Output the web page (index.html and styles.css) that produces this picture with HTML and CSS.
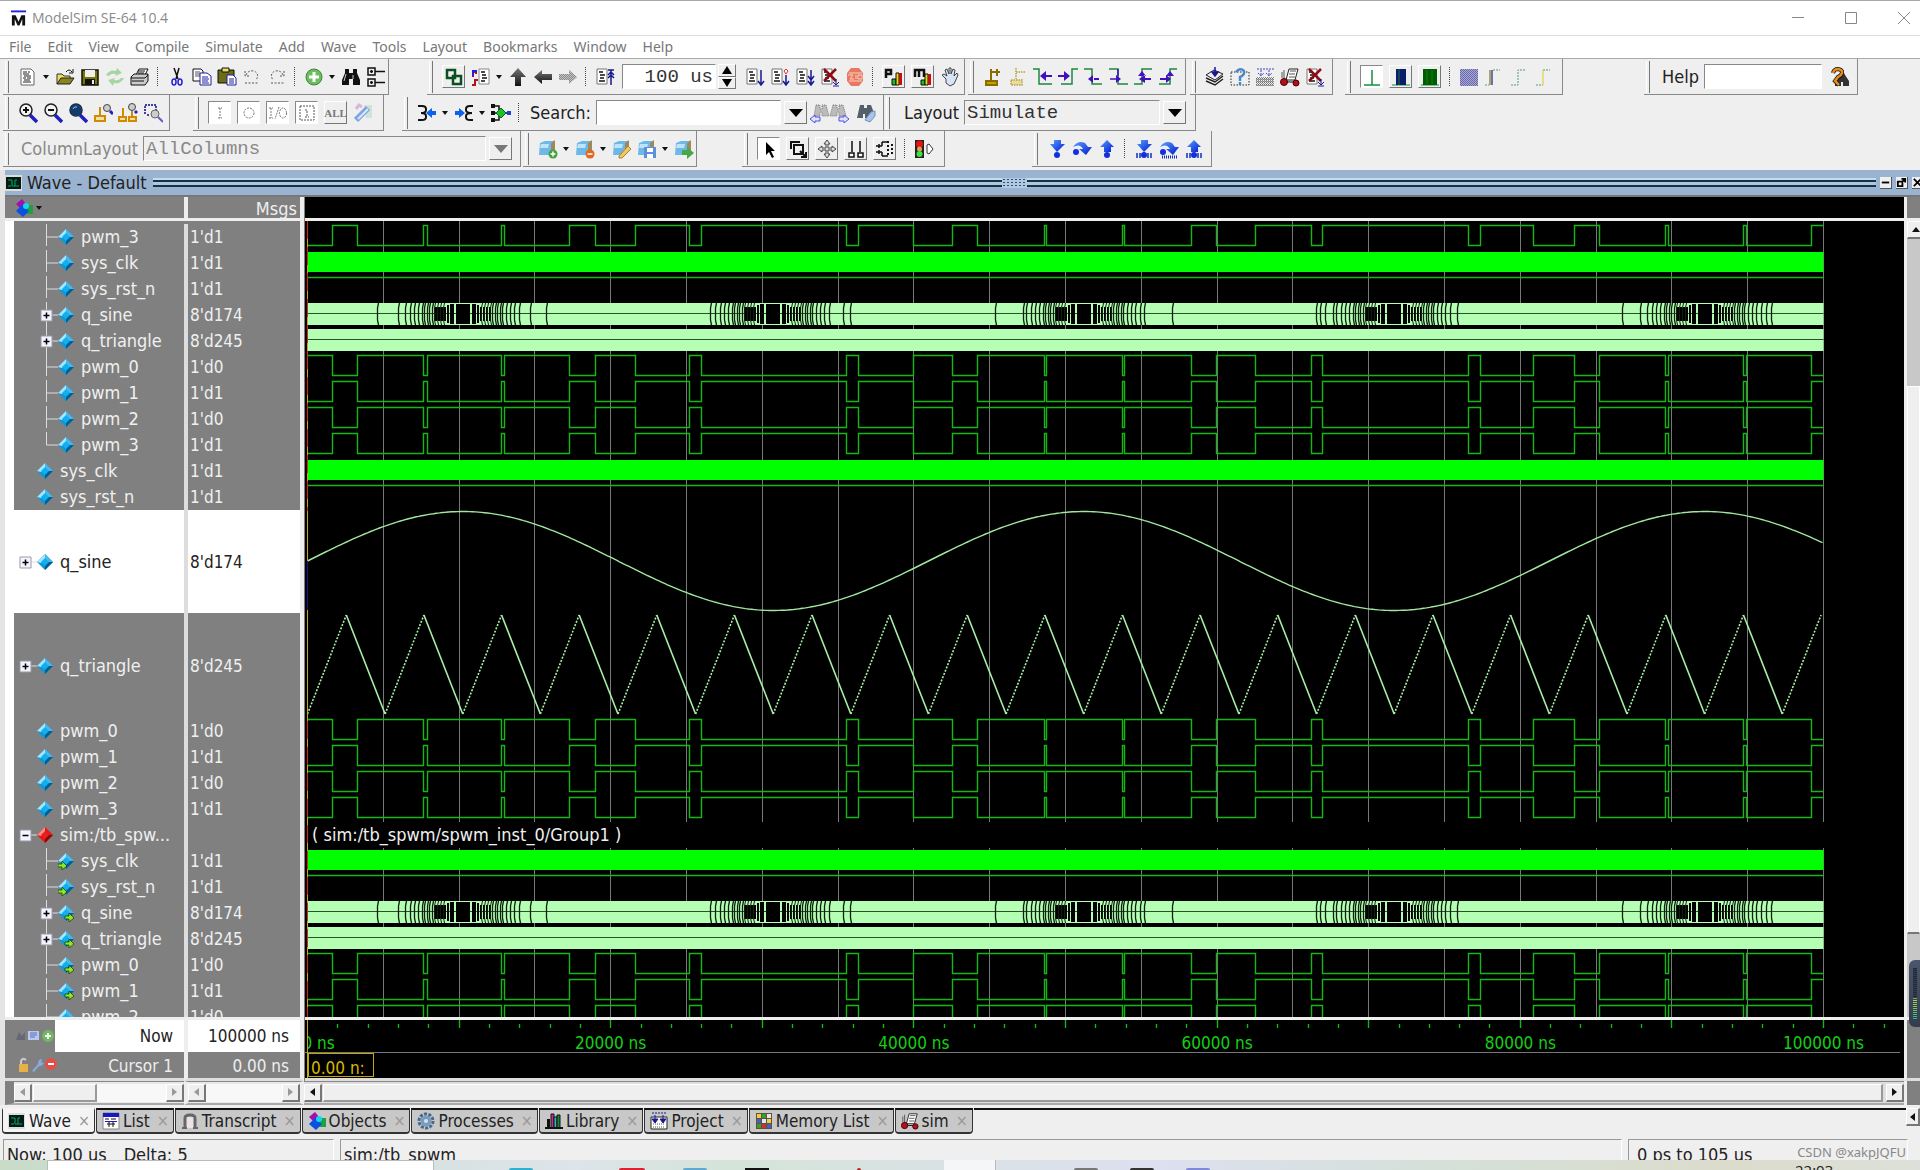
FILE: index.html
```html
<!DOCTYPE html>
<html lang="en">
<head>
<meta charset="utf-8">
<title>ModelSim SE-64 10.4</title>
<link rel="stylesheet" href="styles.css">
</head>
<body>
<svg class="defs" aria-hidden="true">
  <defs>
    <linearGradient id="blueDown" x1="0" y1="0" x2="1" y2="1"><stop offset="0" stop-color="#5aa0ff"/><stop offset="1" stop-color="#0018d0"/></linearGradient>
    <linearGradient id="grey" x1="0" y1="0" x2="0" y2="1"><stop offset="0" stop-color="#777"/><stop offset="1" stop-color="#111"/></linearGradient>
    <pattern id="dots" width="2" height="2" patternUnits="userSpaceOnUse"><path d="M0 0h1v1H0zM1 1h1v1H1z" fill="#888"/></pattern>
    <pattern id="bluedots" width="2" height="2" patternUnits="userSpaceOnUse"><path d="M0 0h1v1H0zM1 1h1v1H1z" fill="#2a2a90"/></pattern>
  </defs>
  <symbol id="page" viewBox="0 0 20 20"><path d="M3 2h10l3 3v13H3z" fill="#fff" stroke="#666"/><path d="M5 5h4M10 5h2M5 7h6M6 9h7M5 11h3M9 11h4M6 13h6M5 15h8" stroke="#222"/></symbol>
  <symbol id="open" viewBox="0 0 20 20"><path d="M2 17V7h5l2 2h6v3" fill="#e8e060" stroke="#333"/><path d="M2 17l4-6h13l-4 6z" fill="#8a8420" stroke="#222"/><path d="M11 5q3-4 6 0M18 2v4h-4" fill="none" stroke="#111"/></symbol>
  <symbol id="save" viewBox="0 0 20 20"><path d="M2 3h16v15H2z" fill="#7a7400" stroke="#111" stroke-width="1.5"/><path d="M5 3h10v7H5z" fill="#eee"/><path d="M5 12h10v6H5z" fill="#111"/><path d="M12 13h2v4h-2z" fill="#eee"/></symbol>
  <symbol id="refresh" viewBox="0 0 20 20"><path d="M1 8q4-6 10-4l1-3 5 5-7 3 1-2q-5-1-7 2z M19 11q-4 7-10 5l-1 3-5-6 7-2-1 2q5 1 7-2z" fill="#a4d6a4"/></symbol>
  <symbol id="print" viewBox="0 0 20 20"><path d="M6 8l3-6h9l-3 6" fill="#fff" stroke="#111"/><path d="M1 10l3-3h14v7l-3 4H1z" fill="#ccc" stroke="#111"/><path d="M1 11h14l3-3M2 14h12M8 4h7M8 6h6" stroke="#111" fill="none"/></symbol>
  <symbol id="cut" viewBox="0 0 20 20"><path d="M7 1l4 11M12 1L9 12" stroke="#111" stroke-width="1.5"/><ellipse cx="7" cy="15" rx="2" ry="3" fill="none" stroke="#2020e0" stroke-width="1.5"/><ellipse cx="13" cy="15" rx="2" ry="3" fill="none" stroke="#2020e0" stroke-width="1.5"/></symbol>
  <symbol id="copy" viewBox="0 0 20 20"><path d="M1 2h8l2 2v10H1z" fill="#fff" stroke="#111"/><path d="M3 5h5M3 7h6M3 9h5" stroke="#555"/><path d="M8 6h7l4 3v9H8z" fill="#fff" stroke="#2020a0"/><path d="M10 10h6M10 12h7M10 14h6M10 16h7" stroke="#2020a0"/></symbol>
  <symbol id="paste" viewBox="0 0 20 20"><path d="M1 3h16v13H1z" fill="#6b6b18" stroke="#111"/><path d="M5 1h7v4H5z" fill="#e8e060" stroke="#111"/><path d="M10 8h6l3 3v7h-9z" fill="#fff" stroke="#2020a0"/><path d="M12 12h5M12 14h5M12 16h5" stroke="#2020a0"/></symbol>
  <symbol id="undo" viewBox="0 0 20 20"><path d="M3 4v5h5M4 8q2-5 8-4 6 3 2 9M3 16h13" fill="none" stroke="#555" stroke-dasharray="2 1.500"/></symbol>
  <symbol id="redo" viewBox="0 0 20 20"><path d="M17 4v5h-5M16 8q-2-5-8-4-6 3-2 9M4 16h13" fill="none" stroke="#555" stroke-dasharray="2 1.500"/></symbol>
  <symbol id="add" viewBox="0 0 20 20"><circle cx="10" cy="10" r="8" fill="#6cbc60" stroke="#3c8c38"/><path d="M10 5v10M5 10h10" stroke="#fff" stroke-width="3"/></symbol>
  <symbol id="binoc" viewBox="0 0 20 20"><path d="M4 2h4v4h4V2h4v4l3 7v5h-7v-6H8v6H1v-5l3-7z" fill="#111"/><path d="M5 7l-2 7M12 8v4" stroke="#ccc"/></symbol>
  <symbol id="tree" viewBox="0 0 20 20"><path d="M2 1h7v7H2zM2 12h7v7H2z" fill="#eee" stroke="#111" stroke-width="1.500"/><path d="M4 4.500h3M5.500 3v3M4 15.500h3M5.500 14v3M9 4.500h10M9 15.500h10" stroke="#111" stroke-width="1.500"/></symbol>
  <symbol id="link" viewBox="0 0 20 20"><path d="M3 3h8v8H3zM9 9h8v8H9z" fill="none" stroke="#0a5020" stroke-width="2.500"/></symbol>
  <symbol id="restart" viewBox="0 0 20 20"><path d="M1 18h3v-5h3M2 10V5h4M5 3v4" fill="none" stroke="#b01020" stroke-width="2"/><path d="M2 9V4h4" fill="none" stroke="#2020e0" stroke-width="2"/><path d="M8 2h10v15H8z" fill="#fff" stroke="#888"/><path d="M10 5h4M11 8h4M11 11h5M10 14h4" stroke="#111" stroke-width="1.500"/></symbol>
  <symbol id="up" viewBox="0 0 20 20"><path d="M10 1l8 9h-5v9H7v-9H2z" fill="url(#grey)"/></symbol>
  <symbol id="left" viewBox="0 0 20 20"><path d="M1 10l8-7v4h10v6H9v4z" fill="url(#grey)"/></symbol>
  <symbol id="right" viewBox="0 0 20 20"><path d="M19 10l-8-7v4H1v6h10v4z" fill="#c4c4c4"/><path d="M19 10l-8-7v4H1v6h10v4z" fill="url(#dots)"/></symbol>
  <symbol id="code" viewBox="0 0 20 20"><path d="M2 2h10v15H2z" fill="#fff" stroke="#777"/><path d="M4 5h4M5 8h5M5 11h4M4 14h6" stroke="#111" stroke-width="1.500"/></symbol>
  <symbol id="runlen" viewBox="0 0 20 20"><use href="#code"/><path d="M13 3h6M16 3v15M13 8l3-3 3 3M13 11l3-3 3 3" stroke="#181890" stroke-width="1.500" fill="none"/></symbol>
  <symbol id="run" viewBox="0 0 20 20"><use href="#code"/><path d="M16 3v14M13 14l3 4 3-4" stroke="#181890" stroke-width="1.500" fill="none"/></symbol>
  <symbol id="cont" viewBox="0 0 20 20"><use href="#code"/><path d="M16 8v9M13 14l3 4 3-4" stroke="#181890" stroke-width="1.500" fill="none"/><path d="M14 4l2-2 2 2-2 3z" fill="#fff" stroke="#e03030"/></symbol>
  <symbol id="runall" viewBox="0 0 20 20"><use href="#code"/><path d="M16 3v14M13 9l3 4 3-4M13 14l3 4 3-4" stroke="#181890" stroke-width="1.500" fill="none"/></symbol>
  <symbol id="break" viewBox="0 0 20 20"><use href="#code"/><path d="M4 2l12 12M16 2L4 14" stroke="#900c14" stroke-width="2.500"/><path d="M16 12v6M13 15l3 3 3-3M13 19h6" stroke="#181890" fill="none"/></symbol>
  <symbol id="stop" viewBox="0 0 20 20"><path d="M6 1h8l4 5v8l-4 5H6l-4-5V6z" fill="#e87860"/><path d="M3 8h5l-3 4h4M11 8v4M13 8h4v4h-4zM4 6h13M4 14h13" stroke="#fbd0c8" fill="none"/></symbol>
  <symbol id="perf" viewBox="0 0 20 20"><path d="M2 11V3h5v4H2" fill="none" stroke="#111" stroke-width="2.500"/><path d="M8 12h4v6H8z" fill="#18c018" stroke="#111"/><path d="M12 6h3v12h-3z" fill="#e8d820" stroke="#111"/><path d="M15 6h3v12h-3z" fill="#c01010"/></symbol>
  <symbol id="mem" viewBox="0 0 20 20"><path d="M2 10V3h9v7M6 3v7" fill="none" stroke="#111" stroke-width="2.500"/><path d="M8 13h4v5H8z" fill="#18c018" stroke="#111"/><path d="M12 7h3v11h-3z" fill="#e8d820" stroke="#111"/><path d="M15 7h3v11h-3z" fill="#c01010"/></symbol>
  <symbol id="hand" viewBox="0 0 20 20"><path d="M6 12L2 8l2-1 3 2-2-6 2-1 2 5V1h2v6l2-5 2 1-1 6 3-3 1 2-4 9-4 2-4-3z" fill="#d8e4f4" stroke="#444"/></symbol>
  <symbol id="cursadd" viewBox="0 0 20 20"><path d="M8 2v11M3 14h11v4H3zM8 5h9M14 2v7" fill="#c8a000" stroke="#8a6c00" stroke-width="2"/></symbol>
  <symbol id="cursdel" viewBox="0 0 20 20"><path d="M8 1v11M3 13h11v5H3zM8 5h9" fill="#e8dca0" stroke="#b8a040" stroke-width="1.500" stroke-dasharray="1.500 1"/></symbol>
  <symbol id="prevt" viewBox="0 0 20 20"><path d="M0 2h6v15h13" fill="none" stroke="#1c8a3c" stroke-width="1.500"/><path d="M19 9h-8" stroke="#4010c0" stroke-width="2"/><path d="M7 9l6-5v10z" fill="#4010c0"/></symbol>
  <symbol id="nextt" viewBox="0 0 20 20"><path d="M3 17h11V2h6" fill="none" stroke="#1c8a3c" stroke-width="1.500"/><path d="M0 9h7" stroke="#4010c0" stroke-width="2"/><path d="M12 9L6 4v10z" fill="#4010c0"/></symbol>
  <symbol id="fallp" viewBox="0 0 20 20"><path d="M1 2h8v15h10" fill="none" stroke="#1c8a3c" stroke-width="1.500"/><path d="M16 12h-5" stroke="#4010c0" stroke-width="2"/><path d="M5 12l5-4v8z" fill="#4010c0"/></symbol>
  <symbol id="falln" viewBox="0 0 20 20"><path d="M1 2h9v15h10" fill="none" stroke="#1c8a3c" stroke-width="1.500"/><path d="M2 12h6M10 2v7" stroke="#4010c0" stroke-width="1.500"/><path d="M13 12l-5-4v8z" fill="#4010c0"/></symbol>
  <symbol id="risep" viewBox="0 0 20 20"><path d="M1 17h8V2h10" fill="none" stroke="#1c8a3c" stroke-width="1.500"/><path d="M18 12h-6" stroke="#4010c0" stroke-width="2"/><path d="M6 12l6-4v8zM5 9h8L9 4z" fill="#4010c0"/></symbol>
  <symbol id="risen" viewBox="0 0 20 20"><path d="M1 17h11V2h7" fill="none" stroke="#1c8a3c" stroke-width="1.500"/><path d="M2 12h6" stroke="#4010c0" stroke-width="2"/><path d="M13 12l-5-4v8zM8 9h8l-4-5z" fill="#4010c0"/></symbol>
  <symbol id="stack" viewBox="0 0 20 20"><path d="M1 14l9 4 8-6M1 11l9 4 8-6" fill="none" stroke="#222" stroke-width="1.500"/><path d="M1 8l8-5 9 4-8 6z" fill="#eee" stroke="#222"/><path d="M10 0v7M7 5l3 4 3-4z" fill="#181890" stroke="#181890" stroke-width="1.500"/></symbol>
  <symbol id="query" viewBox="0 0 20 20"><path d="M1 5h18v13H1z" fill="none" stroke="#222" stroke-dasharray="1.500 1.500"/><path d="M6 5q4-5 8-1 1 4-4 6v4M10 15v3" fill="none" stroke="#4a8ac8" stroke-width="2.500"/></symbol>
  <symbol id="grid" viewBox="0 0 20 20"><path d="M1 10h18v9H1z" fill="url(#dots)"/><path d="M1 12h18M1 15h18M1 18h18" stroke="#555" stroke-dasharray="1 1"/><path d="M2 2h17M6 3v6M14 3v6M3 6l3 3 3-3M11 6l3 3 3-3" fill="none" stroke="#4040c0" stroke-dasharray="2 1"/></symbol>
  <symbol id="simi" viewBox="0 0 20 20"><path d="M6 13L9 2h9l-3 11z" fill="#fff" stroke="#222"/><path d="M10 4h6M9 7h6M9 10h6M4 3v9M2 5v6" stroke="#555"/><path d="M3 15h14" stroke="#111"/><circle cx="4" cy="15" r="3.500" fill="#b01020" stroke="#400"/><circle cx="16" cy="16" r="3" fill="#b01020" stroke="#400"/></symbol>
  <symbol id="w1" viewBox="0 0 20 20"><path d="M2 18h16M10 18V3" stroke="#18903c" stroke-width="1.500"/></symbol>
  <symbol id="w2" viewBox="0 0 20 20"><path d="M1 18h18" stroke="#18903c"/><path d="M5 2h10v16H5z" fill="#0c1c6c"/><path d="M8 2v16" stroke="#18703c"/></symbol>
  <symbol id="w3" viewBox="0 0 20 20"><path d="M1 18h18" stroke="#18903c"/><path d="M3 2h14v16H3z" fill="#005c00"/><path d="M7 3v14M12 3v14" stroke="#108010"/></symbol>
  <symbol id="w4" viewBox="0 0 20 20"><path d="M1 2h18v17H1z" fill="#a8a8d0"/><path d="M1 2h18v17H1z" fill="url(#bluedots)" opacity=".5"/></symbol>
  <symbol id="w5" viewBox="0 0 20 20"><path d="M5 3h4v15H5z" fill="#7070a8"/><path d="M1 18h4M9 3h7" stroke="#50a070" stroke-dasharray="2 1"/><path d="M6 3v15" stroke="#e0d840"/></symbol>
  <symbol id="w6" viewBox="0 0 20 20"><path d="M2 18h7V3h7" fill="none" stroke="#50a070" stroke-dasharray="2 1"/></symbol>
  <symbol id="w7" viewBox="0 0 20 20"><path d="M2 18h7M9 3h7" stroke="#50a070" stroke-dasharray="2 1"/><path d="M9 3v15" stroke="#d8d020"/></symbol>
  <symbol id="helpfind" viewBox="0 0 20 20"><path d="M8 9l3-3h3l1 2 4 6v5h-6v-4h-2v4H5v-5z" fill="#333"/><path d="M3 6q1-4 5-4 5 1 4 4-1 3-4 4l-3 4 4 4" fill="none" stroke="#111" stroke-width="4"/><path d="M3 6q1-4 5-4 5 1 4 4-1 3-4 4l-3 4 4 4" fill="none" stroke="#e88c20" stroke-width="2.500"/></symbol>
  <symbol id="lens" viewBox="0 0 20 20"><path d="M12 12l7 7" stroke="#2020c0" stroke-width="3.500"/><circle cx="8" cy="7" r="6" fill="#f4f4f8" stroke="#222" stroke-width="1.500"/></symbol>
  <symbol id="zin" viewBox="0 0 20 20"><use href="#lens"/><path d="M8 4v6M5 7h6" stroke="#111" stroke-width="2"/></symbol>
  <symbol id="zout" viewBox="0 0 20 20"><use href="#lens"/><path d="M5 7h6" stroke="#111" stroke-width="2"/></symbol>
  <symbol id="zfull" viewBox="0 0 20 20"><use href="#lens"/><circle cx="8" cy="7" r="6" fill="#103c70"/><path d="M5 6q1-3 4-2" stroke="#a0c8e8" fill="none"/></symbol>
  <symbol id="zcur" viewBox="0 0 20 20"><path d="M7 4v9M2 13h10v5H2z" fill="#f0e0b0" stroke="#d08c00" stroke-width="2"/><path d="M17 8l3 3" stroke="#2020c0" stroke-width="3"/><circle cx="14" cy="5" r="3.500" fill="#ccc" stroke="#444"/></symbol>
  <symbol id="z2cur" viewBox="0 0 20 20"><path d="M5 5v9M1 14h7v4H1zM14 8v6M11 14h7v4h-7z" fill="#f0e0b0" stroke="#d08c00" stroke-width="2"/><path d="M17 8l2 2" stroke="#2020c0" stroke-width="3"/><circle cx="14" cy="4" r="3.500" fill="#ccc" stroke="#444"/></symbol>
  <symbol id="zsel" viewBox="0 0 20 20"><path d="M2 11V2h11v5M4 12h3" fill="none" stroke="#4040a0" stroke-width="2" stroke-dasharray="2 1"/><path d="M15 14l5 5" stroke="#6060c0" stroke-width="2"/><circle cx="12" cy="11" r="4" fill="#ccc" stroke="#666"/></symbol>
  <symbol id="fi" viewBox="0 0 20 20"><path d="M8 5h4M10 5v10M8 15h4" stroke="#777" stroke-dasharray="2 1"/></symbol>
  <symbol id="fo" viewBox="0 0 20 20"><circle cx="10" cy="10" r="5" fill="none" stroke="#777" stroke-dasharray="2 1"/></symbol>
  <symbol id="fio" viewBox="0 0 20 20"><path d="M3 5v10M1 5h4M1 15h4M11 4L7 16" stroke="#777" stroke-dasharray="2 1"/><ellipse cx="15" cy="10" rx="3.500" ry="5" fill="none" stroke="#777" stroke-dasharray="2 1"/></symbol>
  <symbol id="fint" viewBox="0 0 20 20"><path d="M3 3h14v14H3zM8 7h2v7M8 14h4" fill="none" stroke="#555" stroke-dasharray="2 1"/></symbol>
  <symbol id="wand" viewBox="0 0 20 20"><path d="M3 6l3-4 3 2" stroke="#d8b8d8" stroke-width="3" fill="none"/><path d="M11 2h8v13h-6z" fill="#cfe4d4"/><path d="M3 17L15 5" stroke="#80a4e0" stroke-width="6"/><path d="M5 16L15 6" stroke="#d8e8ff" stroke-width="2"/></symbol>
  <symbol id="ing" viewBox="0 0 20 20"><path d="M1 3h4q4 0 4 3v1q0 3-5 3 5 0 5 3v1q0 3-4 3H1" fill="none" stroke="#111" stroke-width="2"/><path d="M9 10l6-5v3h4v4h-4v3z" fill="#1060f0"/></symbol>
  <symbol id="outg" viewBox="0 0 20 20"><path d="M19 3h-3q-4 0-4 3v1q0 3 6 3-6 0-6 3v1q0 3 4 3h3" fill="none" stroke="#111" stroke-width="2"/><path d="M11 10L5 5v3H1v4h4v3z" fill="#1060f0"/></symbol>
  <symbol id="net" viewBox="0 0 20 20"><path d="M2 3h6v14H2M2 10h17" fill="none" stroke="#111" stroke-width="1.500"/><path d="M0 1h4v4H0zM0 8h4v4H0zM0 15h4v4H0z" fill="#111"/><path d="M10 5l5 5-5 5-5-5z" fill="#20c020" stroke="#063"/><path d="M16 8h4v4h-4z" fill="#2040e0"/></symbol>
  <symbol id="findp" viewBox="0 0 20 20"><path d="M6 2h4v4h2V2h4l3 11h-7V9h-2v4H4z" fill="#bbb"/><path d="M6 2h4v4h2V2h4l3 11h-7V9h-2v4H4z" fill="none" stroke="#777" stroke-dasharray="1 1"/><path d="M0 16l5-4v2h5v4H5v2z" fill="#e0e0ff" stroke="#5050e0"/></symbol>
  <symbol id="findn" viewBox="0 0 20 20"><path d="M4 2h4v4h2V2h4l3 11h-7V9H8v4H1z" fill="#bbb"/><path d="M4 2h4v4h2V2h4l3 11h-7V9H8v4H1z" fill="none" stroke="#777" stroke-dasharray="1 1"/><path d="M20 16l-5-4v2h-5v4h5v2z" fill="#e0e0ff" stroke="#5050e0"/></symbol>
  <symbol id="findo" viewBox="0 0 20 20"><path d="M4 2h4v3h3V2h4l3 8-5 5h-4v-4H7v4H1z" fill="#53606c"/><path d="M9 17l6-8 4-1v5l-5 6z" fill="#a8c4ec" stroke="#7890b8"/></symbol>
  <symbol id="cube" viewBox="0 0 20 20"><path d="M2 4l5-2h9l-1 11-4 3H1z" fill="#6cb8e8"/><path d="M13 4l4-3v10l-4 4z" fill="#a08858"/><path d="M3 5h8l-1 4H2z" fill="#bfe4fa"/></symbol>
  <symbol id="cadd" viewBox="0 0 20 20"><use href="#cube"/><circle cx="15" cy="15" r="4.500" fill="#48a040"/><path d="M15 12.500v5M12.500 15h5" stroke="#fff" stroke-width="1.500"/></symbol>
  <symbol id="cdel" viewBox="0 0 20 20"><use href="#cube"/><circle cx="15" cy="15" r="4.500" fill="#e06820"/><path d="M12.500 15h5" stroke="#fff" stroke-width="1.500"/></symbol>
  <symbol id="cedit" viewBox="0 0 20 20"><use href="#cube"/><path d="M7 17l9-10 3 3-9 9H7z" fill="#f0c860" stroke="#b08030"/></symbol>
  <symbol id="csave" viewBox="0 0 20 20"><use href="#cube"/><path d="M7 8h12v11H7z" fill="#5c90d8"/><path d="M10 9h6v4h-6zM10 15h6v4h-6z" fill="#fff"/></symbol>
  <symbol id="cgo" viewBox="0 0 20 20"><use href="#cube"/><path d="M8 11h5V8l7 6-7 6v-4H8z" fill="#48a848"/></symbol>
  <symbol id="arrow" viewBox="0 0 20 20"><path d="M7 3v13l3-3 3 6 2-1-3-6h4z" fill="#000"/></symbol>
  <symbol id="zoomm" viewBox="0 0 20 20"><path d="M3 10V3h9M6 6h9v9H6z" fill="none" stroke="#111" stroke-width="2"/><path d="M12 12l6 6M18 13v5h-5" fill="none" stroke="#111" stroke-width="2"/></symbol>
  <symbol id="pan" viewBox="0 0 20 20"><path d="M10 1l3 4h-2v4h4V7l4 3-4 3v-2h-4v4h2l-3 4-3-4h2v-4H5v2l-4-3 4-3v2h4V5H7z" fill="#ddd" stroke="#444"/></symbol>
  <symbol id="two" viewBox="0 0 20 20"><path d="M6 2v11M14 2v11M3 14h5v4H3zM12 14h5v4h-5z" fill="#fff" stroke="#111" stroke-width="1.500"/></symbol>
  <symbol id="edit" viewBox="0 0 20 20"><path d="M7 3h6M7 17h6M7 3v4M7 13v4M1 7h6M1 13h6M4 5v4M4 11v4" fill="none" stroke="#111" stroke-width="1.500"/><path d="M13 2v16M17 5v12" stroke="#111" stroke-width="2" stroke-dasharray="2 2"/></symbol>
  <symbol id="light" viewBox="0 0 20 20"><path d="M1 1h9v18H1z" fill="#222"/><circle cx="5.500" cy="5" r="3.500" fill="#e81010"/><circle cx="5.500" cy="10" r="2.500" fill="#e0a050"/><circle cx="5.500" cy="15" r="3" fill="#40e040"/><path d="M13 6v8l2 1 4-5-4-5z" fill="#fff" stroke="#333"/></symbol>
  <symbol id="into" viewBox="0 0 20 20"><path d="M7 1h7v4h4l-8 8-7-8h4z" fill="url(#blueDown)"/><circle cx="10" cy="16" r="3" fill="#1030e0"/></symbol>
  <symbol id="over" viewBox="0 0 20 20"><path d="M1 8Q6 1 13 4l3 4h4l-6 8-7-6h4Q8 4 1 8z" fill="url(#blueDown)"/><circle cx="4" cy="13" r="3" fill="#1030e0"/></symbol>
  <symbol id="outof" viewBox="0 0 20 20"><path d="M10 1l7 7h-3v5H7V8H3z" fill="url(#blueDown)"/><circle cx="10" cy="16" r="3" fill="#1030e0"/></symbol>
  <symbol id="bars" viewBox="0 0 20 20"><path d="M3 14v5M6 14v5M14 14v5M17 14v5" stroke="#1030c0" stroke-width="1.500"/></symbol>
  <symbol id="into2" viewBox="0 0 20 20"><use href="#into"/><use href="#bars"/></symbol>
  <symbol id="over2" viewBox="0 0 20 20"><use href="#over"/><path d="M3 18h15" stroke="#1030c0" stroke-width="3" stroke-dasharray="1 1"/></symbol>
  <symbol id="outof2" viewBox="0 0 20 20"><use href="#outof"/><use href="#bars"/></symbol>
  <symbol id="wave" viewBox="0 0 18 18"><path d="M0 1h17v16H0z" fill="#ddd"/><path d="M1 3h15v12H1z" fill="#041c14"/><path d="M3 6h4v6h3V6h2M3 12h3M10 12h4" stroke="#0a6" fill="none"/></symbol>
  <symbol id="gem" viewBox="0 0 16 18"><path d="M8 1l8 8-8 8-8-8z" fill="#0a9ad8"/><path d="M8 1l8 8H8z" fill="#48b8e8"/><path d="M8 17l8-8H8z" fill="#065c90"/><path d="M8 1L0 9l4 1 4-4z" fill="#a8e4fc"/><path d="M8 5l4 4-4 4-4-4z" fill="#10b0f0"/></symbol>
  <symbol id="redgem" viewBox="0 0 16 18"><path d="M8 1l8 8-8 8-8-8z" fill="#e01818"/><path d="M8 17l8-8H8z" fill="#8c0808"/><path d="M8 1L0 9l4 1 4-4z" fill="#f88"/><path d="M8 5l4 4-4 4-4-4z" fill="#e82020"/></symbol>
  <symbol id="ingem" viewBox="0 0 16 18"><use href="#gem"/><path d="M0 12h4V9l5 5-5 4v-3H0z" fill="#8ce820" stroke="#183008" stroke-width=".7"/></symbol>
  <symbol id="outgem" viewBox="0 0 16 18"><use href="#gem"/><path d="M7 12h4V9l5 5-5 4v-3H7z" fill="#8ce820" stroke="#183008" stroke-width=".7"/></symbol>
  <symbol id="tee" viewBox="0 0 22 26"><path d="M10.500 0v22M10.500 13H22" stroke="#ddd" fill="none"/></symbol>
  <symbol id="end" viewBox="0 0 22 26"><path d="M10.500 0v13H22" stroke="#ddd" fill="none"/></symbol>
  <symbol id="plus" viewBox="0 0 22 26"><path d="M16 13h6" stroke="#ddd"/><path d="M5 8h11v11H5z" fill="#f4f4ff" stroke="#99a"/><path d="M10.500 10.500v6M7.500 13.500h6" stroke="#000" stroke-width="1.500"/></symbol>
  <symbol id="plusin" viewBox="0 0 22 26"><path d="M10.500 0v26" stroke="#ddd"/><use href="#plus"/></symbol>
  <symbol id="minus" viewBox="0 0 22 26"><path d="M16 13h6" stroke="#ddd"/><path d="M5 8h11v11H5z" fill="#f4f4ff" stroke="#99a"/><path d="M7.500 13.500h6" stroke="#000" stroke-width="1.500"/></symbol>
  <symbol id="objects" viewBox="0 0 18 18"><path d="M1 5l6-5 4 5v4H5z" fill="#a010b0"/><path d="M10 6h8v9h-8z" fill="#20a040"/><path d="M7 6l7 6-6 6-7-6z" fill="#0850e0"/><circle cx="11" cy="7" r="3" fill="#10d8f0"/></symbol>
  <symbol id="list" viewBox="0 0 18 18"><path d="M1 1h16v16H1z" fill="#fff" stroke="#888"/><path d="M1 1h16v4H1zM3 9h12v1H3z" fill="#1818c0"/><path d="M3 7h4M9 7h5M5 12h8M7 10v5M11 10v5" stroke="#111"/></symbol>
  <symbol id="script" viewBox="0 0 18 18"><path d="M4 16V6q0-3 5-3t5 3v10" fill="#ece4e4" stroke="#666" stroke-width="3"/><path d="M1 16h5M12 16h5" stroke="#666" stroke-width="2"/></symbol>
  <symbol id="gear" viewBox="0 0 18 18"><circle cx="9" cy="9" r="7" fill="none" stroke="#44688c" stroke-width="3" stroke-dasharray="3 1.400"/><circle cx="9" cy="9" r="5.500" fill="#7c9cbc"/><circle cx="9" cy="9" r="2" fill="#dde"/></symbol>
  <symbol id="books" viewBox="0 0 18 18"><path d="M2 7h3v9H2z" fill="#111"/><path d="M6 2h3v14H6z" fill="#c03080" stroke="#111"/><path d="M9 5h3v11H9z" fill="#30b0d0" stroke="#111"/><path d="M12 3h3v13h-3z" fill="#208030" stroke="#111"/><path d="M0 16h18" stroke="#111" stroke-width="2"/></symbol>
  <symbol id="project" viewBox="0 0 18 18"><path d="M1 5h16v12H1z" fill="#fff" stroke="#222"/><path d="M3 12h12M3 15h12" stroke="#555" stroke-dasharray="1 1"/><path d="M2 1h14" stroke="#181890" stroke-dasharray="2 1"/><path d="M5 3v4M13 3v4M2 7h6l-3 4zM10 7h6l-3 4z" stroke="#181890" fill="#181890"/></symbol>
  <symbol id="memory" viewBox="0 0 18 18"><path d="M1 1h16v16H1z" fill="#685030"/><path d="M2 2h4v4H2zM12 7h4v4h-4z" fill="#e8d040"/><path d="M7 2h4v4H7zM2 12h4v4H2z" fill="#30a030"/><path d="M12 2h4v4h-4zM7 7h4v4H7z" fill="#d8e8f8"/><path d="M2 7h4v4H2zM12 12h4v4h-4z" fill="#4060d0"/><path d="M7 12h4v4H7z" fill="#d03030"/></symbol>
</svg>

<header class="titlebar">
  <svg class="logo" viewBox="0 0 18 18" aria-hidden="true"><path d="M1 1h16v2H1z" fill="#2222d8"/><path d="M2 17V6h4l3 7 3-7h4v11h-3v-7l-3 7H8l-3-7v7z" fill="#111"/></svg>
  <h1 class="title">ModelSim SE-64 10.4</h1>
  <div class="window-buttons">
    <button aria-label="Minimize"><svg viewBox="0 0 12 12"><path d="M0 5.500h12"/></svg></button>
    <button aria-label="Maximize"><svg viewBox="0 0 12 12"><path d="M.5.5h11v11H.5z"/></svg></button>
    <button aria-label="Close"><svg viewBox="0 0 12 12"><path d="M0 0l12 12M12 0L0 12"/></svg></button>
  </div>
</header>

<nav class="menu">
  <a href="#file">File</a><a href="#edit-menu">Edit</a><a href="#view">View</a><a href="#compile">Compile</a><a href="#simulate">Simulate</a><a href="#add-menu">Add</a><a href="#wave-menu">Wave</a><a href="#tools">Tools</a><a href="#layout-menu">Layout</a><a href="#bookmarks">Bookmarks</a><a href="#window">Window</a><a href="#help">Help</a>
</nav>

<section class="toolbars" aria-label="Toolbars">
  <div class="bar-row">
    <div class="bar bar-standard">
      <button class="tool" aria-label="New"><svg><use href="#page"/></svg></button><button class="drop" aria-label="New menu"></button>
      <button class="tool" aria-label="Open"><svg><use href="#open"/></svg></button>
      <button class="tool" aria-label="Save"><svg><use href="#save"/></svg></button>
      <button class="tool" aria-label="Reload"><svg><use href="#refresh"/></svg></button>
      <button class="tool" aria-label="Print"><svg><use href="#print"/></svg></button>
      <i class="sep"></i>
      <button class="tool" aria-label="Cut"><svg><use href="#cut"/></svg></button>
      <button class="tool" aria-label="Copy"><svg><use href="#copy"/></svg></button>
      <button class="tool" aria-label="Paste"><svg><use href="#paste"/></svg></button>
      <button class="tool" aria-label="Undo"><svg><use href="#undo"/></svg></button>
      <button class="tool" aria-label="Redo"><svg><use href="#redo"/></svg></button>
      <i class="sep"></i>
      <button class="tool" aria-label="Add"><svg><use href="#add"/></svg></button><button class="drop" aria-label="Add menu"></button>
      <button class="tool" aria-label="Find"><svg><use href="#binoc"/></svg></button>
      <button class="tool" aria-label="Expand tree"><svg><use href="#tree"/></svg></button>
    </div>
    <div class="bar bar-simulate">
      <button class="tool raised" aria-label="Link"><svg><use href="#link"/></svg></button>
      <button class="tool" aria-label="Restart"><svg><use href="#restart"/></svg></button><button class="drop" aria-label="Restart menu"></button>
      <button class="tool" aria-label="Up"><svg><use href="#up"/></svg></button>
      <button class="tool" aria-label="Back"><svg><use href="#left"/></svg></button>
      <button class="tool" aria-label="Forward"><svg><use href="#right"/></svg></button>
      <i class="sep"></i>
      <button class="tool" aria-label="Run length"><svg><use href="#runlen"/></svg></button>
      <input class="field run-time" aria-label="Run time" value="100 us">
      <span class="spinner"><button aria-label="Increase"></button><button aria-label="Decrease"></button></span>
      <button class="tool" aria-label="Run"><svg><use href="#run"/></svg></button>
      <button class="tool" aria-label="Continue"><svg><use href="#cont"/></svg></button>
      <button class="tool" aria-label="Run all"><svg><use href="#runall"/></svg></button>
      <button class="tool" aria-label="Break"><svg><use href="#break"/></svg></button>
      <button class="tool" aria-label="Stop"><svg><use href="#stop"/></svg></button>
      <i class="sep"></i>
      <button class="tool raised" aria-label="Performance profile"><svg><use href="#perf"/></svg></button>
      <button class="tool raised" aria-label="Memory profile"><svg><use href="#mem"/></svg></button>
      <button class="tool" aria-label="Grab"><svg><use href="#hand"/></svg></button>
    </div>
    <div class="bar bar-cursor">
      <button class="tool" aria-label="Insert cursor"><svg><use href="#cursadd"/></svg></button>
      <button class="tool" aria-label="Delete cursor"><svg><use href="#cursdel"/></svg></button>
      <button class="tool" aria-label="Previous transition"><svg><use href="#prevt"/></svg></button>
      <button class="tool" aria-label="Next transition"><svg><use href="#nextt"/></svg></button>
      <button class="tool" aria-label="Previous falling edge"><svg><use href="#fallp"/></svg></button>
      <button class="tool" aria-label="Next falling edge"><svg><use href="#falln"/></svg></button>
      <button class="tool" aria-label="Previous rising edge"><svg><use href="#risep"/></svg></button>
      <button class="tool" aria-label="Next rising edge"><svg><use href="#risen"/></svg></button>
    </div>
    <div class="bar bar-compile">
      <button class="tool" aria-label="Compile"><svg><use href="#stack"/></svg></button>
      <button class="tool" aria-label="Compile out of date"><svg><use href="#query"/></svg></button>
      <button class="tool" aria-label="Compile all"><svg><use href="#grid"/></svg></button>
      <button class="tool" aria-label="Start simulation"><svg><use href="#simi"/></svg></button>
      <button class="tool" aria-label="End simulation"><svg><use href="#break"/></svg></button>
    </div>
    <div class="bar bar-expand">
      <button class="tool pressed" aria-label="Expanded time off"><svg><use href="#w1"/></svg></button>
      <button class="tool raised" aria-label="Expanded time deltas"><svg><use href="#w2"/></svg></button>
      <button class="tool raised" aria-label="Expanded time events"><svg><use href="#w3"/></svg></button>
      <i class="sep"></i>
      <button class="tool" aria-label="Expand all time"><svg><use href="#w4"/></svg></button>
      <button class="tool" aria-label="Expand time at cursor"><svg><use href="#w5"/></svg></button>
      <button class="tool" aria-label="Collapse all time"><svg><use href="#w6"/></svg></button>
      <button class="tool" aria-label="Collapse time at cursor"><svg><use href="#w7"/></svg></button>
    </div>
    <div class="bar bar-help">
      <label for="help-box">Help</label>
      <input class="field help-box" id="help-box">
      <button class="tool" aria-label="Search help"><svg><use href="#helpfind"/></svg></button>
    </div>
  </div>

  <div class="bar-row">
    <div class="bar bar-zoom">
      <button class="tool" aria-label="Zoom in"><svg><use href="#zin"/></svg></button>
      <button class="tool" aria-label="Zoom out"><svg><use href="#zout"/></svg></button>
      <button class="tool" aria-label="Zoom full"><svg><use href="#zfull"/></svg></button>
      <button class="tool" aria-label="Zoom on cursor"><svg><use href="#zcur"/></svg></button>
      <button class="tool" aria-label="Zoom between cursors"><svg><use href="#z2cur"/></svg></button>
      <button class="tool" aria-label="Zoom others"><svg><use href="#zsel"/></svg></button>
    </div>
    <div class="bar bar-filter">
      <button class="tool pressed" aria-label="Inputs"><svg><use href="#fi"/></svg></button>
      <button class="tool pressed" aria-label="Outputs"><svg><use href="#fo"/></svg></button>
      <button class="tool pressed" aria-label="Inouts"><svg><use href="#fio"/></svg></button>
      <button class="tool pressed" aria-label="Internals"><svg><use href="#fint"/></svg></button>
      <button class="tool raised all">ALL</button>
      <button class="tool" aria-label="Filter options"><svg><use href="#wand"/></svg></button>
    </div>
    <div class="bar bar-search">
      <button class="tool" aria-label="Trace in"><svg><use href="#ing"/></svg></button><button class="drop" aria-label="Trace in menu"></button>
      <button class="tool" aria-label="Trace out"><svg><use href="#outg"/></svg></button><button class="drop" aria-label="Trace out menu"></button>
      <button class="tool" aria-label="Trace net"><svg><use href="#net"/></svg></button>
      <i class="sep"></i>
      <label for="search">Search:</label>
      <input class="field search-box" id="search">
      <button class="combo-arrow" aria-label="Search history"></button>
      <button class="tool tight" aria-label="Search backward"><svg><use href="#findp"/></svg></button>
      <button class="tool tight" aria-label="Search forward"><svg><use href="#findn"/></svg></button>
      <button class="tool options" aria-label="Search options"><svg><use href="#findo"/></svg></button>
    </div>
    <div class="bar bar-layout">
      <label for="layout">Layout</label>
      <select class="field layout-box" id="layout"><option>Simulate</option></select>
      <span class="combo-arrow"></span>
    </div>
  </div>

  <div class="bar-row">
    <div class="bar bar-columns">
      <label class="off" for="columns">ColumnLayout</label>
      <select class="field columns-box" id="columns" disabled><option>AllColumns</option></select>
      <span class="combo-arrow off"></span>
    </div>
    <div class="bar bar-cubes">
      <button class="tool" aria-label="Add group"><svg><use href="#cadd"/></svg></button><button class="drop" aria-label="Add group menu"></button>
      <button class="tool" aria-label="Remove group"><svg><use href="#cdel"/></svg></button><button class="drop" aria-label="Remove group menu"></button>
      <button class="tool" aria-label="Edit group"><svg><use href="#cedit"/></svg></button>
      <button class="tool" aria-label="Save group"><svg><use href="#csave"/></svg></button><button class="drop" aria-label="Save group menu"></button>
      <button class="tool" aria-label="Go to group"><svg><use href="#cgo"/></svg></button>
    </div>
    <div class="bar bar-mode">
      <button class="tool pressed" aria-label="Select mode"><svg><use href="#arrow"/></svg></button>
      <button class="tool raised" aria-label="Zoom mode"><svg><use href="#zoomm"/></svg></button>
      <button class="tool raised" aria-label="Pan mode"><svg><use href="#pan"/></svg></button>
      <button class="tool raised" aria-label="Two cursor mode"><svg><use href="#two"/></svg></button>
      <button class="tool raised" aria-label="Edit mode"><svg><use href="#edit"/></svg></button>
      <i class="sep"></i>
      <button class="tool" aria-label="Stop drawing"><svg><use href="#light"/></svg></button>
    </div>
    <div class="bar bar-step">
      <button class="tool" aria-label="Step into"><svg><use href="#into"/></svg></button>
      <button class="tool" aria-label="Step over"><svg><use href="#over"/></svg></button>
      <button class="tool" aria-label="Step out"><svg><use href="#outof"/></svg></button>
      <i class="sep"></i>
      <button class="tool" aria-label="Step into current"><svg><use href="#into2"/></svg></button>
      <button class="tool" aria-label="Step over current"><svg><use href="#over2"/></svg></button>
      <button class="tool" aria-label="Step out current"><svg><use href="#outof2"/></svg></button>
    </div>
  </div>
</section>

<main class="pane">
  <header class="pane-title">
    <svg class="pane-icon"><use href="#wave"/></svg>
    <h2>Wave - Default</h2>
    <i class="stripes"></i><i class="grip"></i><i class="stripes"></i>
    <span class="pane-buttons">
      <button aria-label="Minimize pane"><svg viewBox="0 0 12 12"><path d="M2 6h8"/></svg></button>
      <button aria-label="Undock pane"><svg viewBox="0 0 12 12"><path d="M2 5h5v5H2zM6 6l4-4M6 2h4v4"/></svg></button>
      <button aria-label="Close pane"><svg viewBox="0 0 12 12"><path d="M2 2l8 8M10 2l-8 8"/></svg></button>
    </span>
  </header>

  <div class="wave">
    <div class="head names-head"><svg class="pane-icon"><use href="#objects"/></svg><button class="drop" aria-label="Column menu"></button></div>
    <div class="head values-head">Msgs</div>
    <div class="head canvas-head"></div>
    <div class="head corner"></div>

    <div class="signals">
      <table>
        <colgroup><col class="col-name"><col class="col-value"></colgroup>
        <tbody>
        <tr><td><div class="name child"><svg class="branch"><use href="#tee"/></svg><svg class="gem"><use href="#gem"/></svg>pwm_3</div></td><td>1'd1</td></tr>
        <tr><td><div class="name child"><svg class="branch"><use href="#tee"/></svg><svg class="gem"><use href="#gem"/></svg>sys_clk</div></td><td>1'd1</td></tr>
        <tr><td><div class="name child"><svg class="branch"><use href="#tee"/></svg><svg class="gem"><use href="#gem"/></svg>sys_rst_n</div></td><td>1'd1</td></tr>
        <tr><td><div class="name child"><svg class="branch"><use href="#plusin"/></svg><svg class="gem"><use href="#gem"/></svg>q_sine</div></td><td>8'd174</td></tr>
        <tr><td><div class="name child"><svg class="branch"><use href="#plusin"/></svg><svg class="gem"><use href="#gem"/></svg>q_triangle</div></td><td>8'd245</td></tr>
        <tr><td><div class="name child"><svg class="branch"><use href="#tee"/></svg><svg class="gem"><use href="#gem"/></svg>pwm_0</div></td><td>1'd0</td></tr>
        <tr><td><div class="name child"><svg class="branch"><use href="#tee"/></svg><svg class="gem"><use href="#gem"/></svg>pwm_1</div></td><td>1'd1</td></tr>
        <tr><td><div class="name child"><svg class="branch"><use href="#tee"/></svg><svg class="gem"><use href="#gem"/></svg>pwm_2</div></td><td>1'd0</td></tr>
        <tr><td><div class="name child"><svg class="branch"><use href="#end"/></svg><svg class="gem"><use href="#gem"/></svg>pwm_3</div></td><td>1'd1</td></tr>
        <tr><td><div class="name"><svg class="branch"></svg><svg class="gem"><use href="#gem"/></svg>sys_clk</div></td><td>1'd1</td></tr>
        <tr><td><div class="name"><svg class="branch"></svg><svg class="gem"><use href="#gem"/></svg>sys_rst_n</div></td><td>1'd1</td></tr>
        <tr class="sine selected"><td><div class="name"><svg class="branch"><use href="#plus"/></svg><svg class="gem"><use href="#gem"/></svg>q_sine</div></td><td>8'd174</td></tr>
        <tr class="triangle"><td><div class="name"><svg class="branch"><use href="#plus"/></svg><svg class="gem"><use href="#gem"/></svg>q_triangle</div></td><td>8'd245</td></tr>
        <tr><td><div class="name"><svg class="branch"></svg><svg class="gem"><use href="#gem"/></svg>pwm_0</div></td><td>1'd0</td></tr>
        <tr><td><div class="name"><svg class="branch"></svg><svg class="gem"><use href="#gem"/></svg>pwm_1</div></td><td>1'd1</td></tr>
        <tr><td><div class="name"><svg class="branch"></svg><svg class="gem"><use href="#gem"/></svg>pwm_2</div></td><td>1'd0</td></tr>
        <tr><td><div class="name"><svg class="branch"></svg><svg class="gem"><use href="#gem"/></svg>pwm_3</div></td><td>1'd1</td></tr>
        <tr><td><div class="name"><svg class="branch"><use href="#minus"/></svg><svg class="gem"><use href="#redgem"/></svg>sim:/tb_spw...</div></td><td></td></tr>
        <tr><td><div class="name child"><svg class="branch"><use href="#tee"/></svg><svg class="gem"><use href="#ingem"/></svg>sys_clk</div></td><td>1'd1</td></tr>
        <tr><td><div class="name child"><svg class="branch"><use href="#tee"/></svg><svg class="gem"><use href="#ingem"/></svg>sys_rst_n</div></td><td>1'd1</td></tr>
        <tr><td><div class="name child"><svg class="branch"><use href="#plusin"/></svg><svg class="gem"><use href="#outgem"/></svg>q_sine</div></td><td>8'd174</td></tr>
        <tr><td><div class="name child"><svg class="branch"><use href="#plusin"/></svg><svg class="gem"><use href="#outgem"/></svg>q_triangle</div></td><td>8'd245</td></tr>
        <tr><td><div class="name child"><svg class="branch"><use href="#tee"/></svg><svg class="gem"><use href="#outgem"/></svg>pwm_0</div></td><td>1'd0</td></tr>
        <tr><td><div class="name child"><svg class="branch"><use href="#tee"/></svg><svg class="gem"><use href="#outgem"/></svg>pwm_1</div></td><td>1'd1</td></tr>
        <tr><td><div class="name child"><svg class="branch"><use href="#tee"/></svg><svg class="gem"><use href="#outgem"/></svg>pwm_2</div></td><td>1'd0</td></tr>
        </tbody>
      </table>
    </div>
    <div class="canvas"><svg id="plot" class="plot" role="img" aria-label="Waveforms"></svg></div>
    <div class="vscroll"><button class="step step-up" aria-label="Scroll up"></button><i class="vthumb"></i></div>

    <div class="foot foot-names">
      <div class="now-row"><span class="foot-icons"><svg viewBox="0 0 40 16"><path d="M1 12l3-8 3 4 3-4v8z" fill="#667"/><path d="M13 3h11v9H13z" fill="#b8c8f0"/><path d="M15 5h7M15 7h7M15 9h5" stroke="#5870b8"/><circle cx="33" cy="8" r="6" fill="#70b860"/><path d="M33 5v6M30 8h6" stroke="#fff" stroke-width="2"/></svg></span><span class="now-cell">Now</span></div>
      <div class="cursor-row"><span class="foot-icons"><svg viewBox="0 0 40 16"><path d="M2 7h9v8H2z" fill="#e8b048"/><path d="M4 7V4q2-4 5-1" stroke="#ccc" fill="none" stroke-width="2"/><path d="M15 14l6-7q0-5 4-5-2 4 2 4-2 4-5 3l-5 6z" fill="#88a8e0"/><circle cx="34" cy="7" r="6" fill="#e05048"/><path d="M31 7h6" stroke="#fff" stroke-width="2"/></svg></span><span class="cursor-cell">Cursor 1</span></div>
    </div>
    <div class="foot foot-values">
      <div class="now-row"><span class="now-cell">100000 ns</span></div>
      <div class="cursor-row"><span class="cursor-cell">0.00 ns</span></div>
    </div>
    <div class="foot foot-canvas"><svg id="ruler" class="ruler" role="img" aria-label="Time ruler"></svg></div>
    <div class="foot corner"></div>

    <div class="hscroll hs-names"><button class="step step-left dim" aria-label="Scroll names left"></button><i class="hthumb short"></i><i class="htrack"></i><button class="step step-right dim" aria-label="Scroll names right"></button></div>
    <div class="hscroll hs-values"><button class="step step-left dim" aria-label="Scroll values left"></button><i class="htrack"></i><button class="step step-right dim" aria-label="Scroll values right"></button></div>
    <div class="hscroll hs-canvas"><button class="step step-left" aria-label="Scroll waves left"></button><i class="hthumb"></i><button class="step step-right" aria-label="Scroll waves right"></button></div>
    <div class="corner"></div>
  </div>
  <div class="meter"></div>
</main>

<nav class="tabs">
  <button class="tab current"><svg><use href="#wave"/></svg>Wave<span>×</span></button>
  <button class="tab"><svg><use href="#list"/></svg>List<span>×</span></button>
  <button class="tab"><svg><use href="#script"/></svg>Transcript<span>×</span></button>
  <button class="tab"><svg><use href="#objects"/></svg>Objects<span>×</span></button>
  <button class="tab"><svg><use href="#gear"/></svg>Processes<span>×</span></button>
  <button class="tab"><svg><use href="#books"/></svg>Library<span>×</span></button>
  <button class="tab"><svg><use href="#project"/></svg>Project<span>×</span></button>
  <button class="tab"><svg><use href="#memory"/></svg>Memory List<span>×</span></button>
  <button class="tab"><svg><use href="#simi"/></svg>sim<span>×</span></button>
  <i class="tabs-fill"></i>
  <button class="step step-left tab-step" aria-label="Previous tabs"></button>
</nav>

<footer class="status">
  <div class="status-now"><span>Now: 100 us</span><span>Delta: 5</span></div>
  <div class="status-path">sim:/tb_spwm</div>
  <div class="status-range">0 ps to 105 us</div>
  <div class="credit">CSDN @xakpJQFU</div>
</footer>

<div class="taskbar">
  <i class="task-search"></i>
  <i class="task-icons"><b class="t1"></b><b class="t2"></b><b class="t3"></b><b class="t4"></b><b class="t5"></b></i>
  <i class="task-active"></i>
  <i class="task-icons more"><b class="t6"></b><b class="t7"></b><b class="t8"></b></i>
  <time class="clock">22:03</time>
</div>
<script src="waves.js"></script>
</body>
</html>
```
FILE: styles.css
```css
* { box-sizing: border-box; }
body {
  margin: 0;
  height: 100vh;
  display: flex;
  flex-direction: column;
  overflow: hidden;
  background: #efefef;
  color: #222;
  font: 18px/22px "DejaVu Sans Condensed", "Noto Sans", sans-serif;
}
button { padding: 0; border: 0; background: none; color: inherit; font: inherit; }
h1, h2 { margin: 0; font-weight: 400; }
i, b { font-style: normal; flex: none; }
svg { display: block; flex: none; }
.defs { position: absolute; width: 0; height: 0; }

.titlebar { display: flex; align-items: center; height: 36px; flex: none; background: #fff; border-top: 1px solid #aaa; border-bottom: 1px solid #ddd; padding: 0 10px; }
.logo { width: 17px; height: 18px; margin-right: 5px; }
.title { flex: 1; font: 14px/20px "Open Sans", sans-serif; color: #8a8a8a; }
.window-buttons { display: flex; gap: 41px; }
.window-buttons svg { width: 12px; height: 12px; fill: none; stroke: #888; }

.menu { display: flex; gap: 16px; height: 23px; flex: none; padding-left: 9px; background: #fff; border-bottom: 1px solid #aaa; font: 14px/21px "Noto Sans", sans-serif; }
.menu a { color: #777; text-decoration: none; }

.toolbars { flex: none; height: 111px; padding-left: 3px; }
.bar-row { display: flex; height: 36px; }
.bar { position: relative; display: flex; align-items: center; height: 36px; padding-left: 12px; border-right: 1px solid #888; border-bottom: 1px solid #888; flex: none; }
.bar::before { content: ""; position: absolute; left: 2px; top: 2px; bottom: 1px; width: 2px; border-left: 1px solid #fff; border-right: 1px solid #777; }
.tool { width: 25px; height: 24px; display: flex; align-items: center; justify-content: center; flex: none; }
.tool svg { width: 20px; height: 20px; }
.tool.raised, .tool.pressed { width: 23px; height: 23px; margin: 0 3px; border: 1px solid #fff; border-right-color: #777; border-bottom-color: #777; }
.tool.pressed { background: #fff; border-color: #888 #fff #fff #888; }
.tool.tight { width: 19px; }
.tool.options { margin-left: 5px; }
.all { font: 700 11px/20px "Liberation Serif", serif; color: #777; }
.drop { width: 12px; height: 22px; display: flex; align-items: center; justify-content: center; flex: none; }
.drop::after { content: ""; border: 3px solid transparent; border-top: 4px solid #111; border-bottom: 0; }
.sep { width: 12px; height: 19px; background: repeating-linear-gradient(#444 0 1px, transparent 1px 2px) 5px 0 / 1px 100% no-repeat; }
.field { height: 25px; margin: 0; padding: 0 2px; border: 1px solid #fff; border-top-color: #888; border-left-color: #888; border-radius: 0; background: #fff; color: #333; font: 19px/22px "Liberation Mono", monospace; appearance: none; flex: none; }
select.field { background: #efefef; }
select.field:disabled { color: #888; opacity: 1; }
.combo-arrow { width: 23px; height: 23px; display: flex; align-items: center; justify-content: center; margin: 0 3px; border: 1px solid #fff; border-right-color: #777; border-bottom-color: #777; flex: none; }
.combo-arrow::after { content: ""; border: 7px solid transparent; border-top: 8px solid #000; border-bottom: 0; }
.combo-arrow.off::after { border-top-color: #777; }
label { margin-right: 5px; flex: none; }
label.off { color: #888; }

.bar-standard { width: 386px; }
.bar-simulate { width: 538px; margin-left: 38px; }
.run-time { width: 94px; margin-left: 5px; text-align: right; }
.spinner { display: flex; flex-direction: column; width: 18px; height: 25px; margin: 0 6px 0 2px; flex: none; }
.spinner button { flex: 1; display: flex; align-items: center; justify-content: center; border: 1px solid #fff; border-right-color: #777; border-bottom-color: #777; }
.spinner button::after { content: ""; border: 5px solid transparent; border-top: 0; border-bottom: 8px solid #000; }
.spinner button + button::after { border-top: 8px solid #000; border-bottom: 0; }
.bar-cursor { width: 218px; margin-left: 3px; }
.bar-compile { width: 143px; margin-left: 4px; }
.bar-expand { width: 218px; margin-left: 12px; }
.bar-help { width: 214px; margin-left: 81px; padding-left: 18px; }
.help-box { width: 118px; margin-right: 6px; }
.bar-zoom { width: 167px; }
.bar-filter { width: 191px; margin-left: 23px; }
.bar-search { width: 482px; margin-left: 18px; }
.bar-search label { margin-left: 5px; }
.search-box { width: 185px; }
.bar-layout { width: 312px; padding-left: 20px; }
.layout-box { width: 196px; }
.bar-columns { width: 518px; padding-left: 18px; }
.columns-box { width: 343px; }
.bar-cubes { width: 174px; margin-left: 2px; }
.bar-mode { width: 203px; margin-left: 45px; }
.bar-step { width: 180px; margin-left: 87px; }

.pane { position: relative; flex: 1; min-height: 0; display: flex; flex-direction: column; border-left: 5px solid #e4e4e4; }
.pane-title { display: flex; align-items: center; height: 27px; flex: none; background: #9ab3d0; border-bottom: 2px solid #777; }
.pane-icon { width: 18px; height: 18px; }
.pane-title h2 { margin: 0 6px 0 4px; font: inherit; line-height: 24px; }
.stripes { flex: 1; height: 9px; background: linear-gradient(#c4dcf0 0 2px, #1c3040 2px 4px, #a8c8e4 4px 7px, #1c3040 7px 9px); }
.grip { width: 25px; height: 10px; background: radial-gradient(circle, #33506c 1px, transparent 1px) 0 0 / 4px 3px #b0cae4; }
.pane-buttons { display: flex; gap: 4px; margin: 0 -4px 0 4px; }
.pane-buttons button { width: 12px; height: 12px; background: #efefef; border-right: 1px solid #555; border-bottom: 1px solid #555; }
.pane-buttons svg { width: 11px; height: 11px; fill: none; stroke: #000; stroke-width: 2; }

.wave { flex: 1; min-height: 0; display: grid; grid-template-columns: 179px 120px minmax(0, 1fr) 16px; grid-template-rows: 24px minmax(0, 1fr) 64px 24px; background: #808080; }
.head { height: 21px; background: #808080; color: #eee; box-shadow: 0 3px 0 #eee; }
.names-head { display: flex; align-items: center; padding-left: 10px; }
.values-head { padding-right: 3px; text-align: right; border-left: 4px solid #eee; border-right: 4px solid #eee; line-height: 24px; overflow: hidden; }
.head.canvas-head { background: #000; border-left: 0; }
.corner, .head.corner { background: #808080; border-left: 3px solid #eee; }

.signals { grid-column: 1 / 3; overflow: hidden; border-left: 9px solid #fff; border-right: 4px solid #eee; }
.signals table { width: 100%; border-collapse: collapse; table-layout: fixed; margin-top: 3px; }
.col-name { width: 172px; }
.signals tr { height: 26px; color: #f0f0f0; }
.signals tr.sine { height: 103px; }
.signals tr.triangle { height: 105px; }
.signals tr.selected { background: #fff; color: #222; }
.signals td { padding: 0 0 0 2px; white-space: nowrap; font-size: 17px; }
.signals td:first-child { padding: 0 0 0 1px; font-size: 18px; }
.signals td + td { border-left: 4px solid #ddd; }
.name { display: flex; align-items: center; height: 26px; overflow: hidden; }
.name.child { padding-left: 21px; }
.branch { width: 22px; height: 26px; }
.gem { width: 16px; height: 18px; margin-right: 7px; }

.canvas { margin-left: 1px; background: #000; overflow: hidden; }
.canvas-head, .foot-canvas { margin-left: 1px; }
.plot { width: 100%; height: 800px; font-size: 18px; }
.vscroll { display: flex; flex-direction: column; background: #c8c8c8; border-left: 3px solid #eee; }
.vthumb { height: 548px; margin-top: 147px; background: #efefef; border: 1px solid #fff; border-bottom: 2px solid #777; }
.step { position: relative; width: 18px; height: 18px; flex: none; display: flex; align-items: center; justify-content: center; background: #efefef; border: 1px solid #fff; border-right: 2px solid #777; border-bottom: 2px solid #777; }
.step::after { content: ""; border: 4px solid transparent; }
.step-up::after { border-top: 0; border-bottom: 5px solid #111; }
.step-left::after { border-left: 0; border-right: 5px solid #111; }
.step-right::after { border-right: 0; border-left: 5px solid #111; }
.step-left.dim::after { border-right-color: #999; }
.step-right.dim::after { border-left-color: #999; }

.foot { border-top: 3px solid #eee; border-bottom: 3px solid #ddd; color: #eee; background: #808080; overflow: hidden; font-size: 17px; }
.foot-values { border-left: 4px solid #eee; border-right: 4px solid #eee; }
.now-row { display: flex; height: 32px; line-height: 33px; }
.cursor-row { display: flex; height: 26px; line-height: 28px; }
.foot-icons { width: 50px; flex: none; padding: 8px 0 0 10px; }
.cursor-row .foot-icons { padding: 5px 0 0 12px; }
.foot-icons svg { width: 40px; height: 16px; }
.now-cell, .cursor-cell { flex: 1; padding-right: 11px; text-align: right; }
.now-cell { background: #fff; color: #222; }
.foot-canvas { background: #000; }
.ruler { width: 100%; height: 60px; }

.hscroll { display: flex; align-items: center; background: #e8e8e8; border-top: 1px solid #888; border-bottom: 2px solid #aaa; }
.hs-names { border-left: 9px solid #808080; }
.hs-values { border-left: 4px solid #eee; border-right: 4px solid #eee; }
.hs-canvas { background: #ddd; }
.hthumb { flex: 1; height: 18px; margin: 0 3px 0 1px; background: #efefef; border: 1px solid #fff; border-right: 2px solid #999; border-bottom: 2px solid #999; }
.hthumb.short { flex: none; width: 64px; margin-right: 0; }
.htrack { flex: 1; height: 18px; background: #f8f8f8; }
.meter { position: absolute; right: 0; bottom: 78px; width: 11px; height: 67px; border-radius: 6px 0 0 6px; background: linear-gradient(#4a566c, #343c4c); }
.meter::after { content: ""; position: absolute; left: 4px; top: 8px; width: 4px; height: 52px; background: repeating-linear-gradient(transparent 0 1px, #343c4c 1px 2px), linear-gradient(#222a38 0 55%, #b8d848 60%, #20b8a0 100%); }

.tabs { display: flex; height: 34px; flex: none; padding: 0 0 5px 2px; border-top: 3px solid #efefef; background: #efefef; font-size: 17px; }
.tab { display: flex; align-items: center; height: 26px; padding: 0 4px 0 5px; margin-right: 1px; border: 1px solid #333; border-top: 2px solid #111; border-bottom-width: 2px; border-radius: 0 0 4px 4px; background: #c8c8c8; flex: none; }
.tab svg { width: 18px; height: 18px; margin-right: 3px; }
.tab span { margin-left: 7px; color: #999; font-size: 16px; line-height: 16px; }
.tab.current { background: #f4f4f4; border-top-color: #f4f4f4; }
.tabs-fill { flex: 1; border-top: 2px solid #111; }
.tab-step { width: 14px; }

.status { display: flex; gap: 6px; height: 21px; flex: none; padding: 0 12px 0 3px; overflow: hidden; position: relative; line-height: 29px; white-space: nowrap; }
.status > div { height: 30px; padding-left: 3px; border: 1px solid #fff; border-top-color: #999; border-left-color: #999; }
.status-now { display: flex; gap: 17px; width: 331px; }
.status-path { flex: 1; }
.status .status-range { width: 280px; padding-left: 8px; }
.status .credit { position: absolute; right: 14px; top: 3px; height: 20px; padding: 0; border: 0; color: #888; font: 14px/20px "Noto Sans", sans-serif; font-size: 13px; }

.taskbar { display: flex; height: 10px; flex: none; overflow: hidden; padding-left: 47px; background: linear-gradient(90deg, #c8dcc8, #dde4ea 30%, #d4e4d8 38%, #dde0f0 60%, #d4e0d8 75%, #dcdccc 90%, #dce0d8); }
.task-search { width: 387px; background: #fff; border: 1px solid #bbb; border-bottom: 0; }
.task-icons { display: flex; gap: 38px; align-items: flex-end; padding-left: 75px; width: 510px; }
.task-icons b { width: 24px; height: 2px; border-radius: 8px 8px 0 0; }
.t1 { background: #30b0d0; }
.task-icons .t2 { width: 26px; margin-left: 48px; background: #e02030; }
.t3 { background: #60a8d0; }
.task-icons .t4 { border-radius: 0; background: #111; }
.task-icons .t5 { width: 4px; margin-left: 50px; background: #c02020; }
.task-active { width: 52px; background: #f4f6f8; border-right: 1px solid #bbb; }
.task-icons.more { padding-left: 78px; gap: 32px; }
.t6 { background: #777; }
.t7 { background: #fff; border: 1px solid #333; }
.t8 { background: #8088d8; }
.clock { margin-left: 289px; font: 15px/20px "Open Sans", sans-serif; color: #222; }
```
FILE: waves.js
```js
const NS = 'http://www.w3.org/2000/svg';
const plot = document.getElementById('plot');
const ruler = document.getElementById('ruler');

const X0 = 2.5;             // time zero
const PX = 0.01516;         // pixels per nanosecond
const END = X0 + 100000 * PX;
const GREEN = '#14b814';
const LIGHT = '#b4ffb4';

function draw(parent, tag, attrs, text) {
  const el = document.createElementNS(NS, tag);
  for (const key in attrs) el.setAttribute(key, attrs[key]);
  if (text) el.textContent = text;
  parent.appendChild(el);
}

// Toggle positions shared by the four PWM outputs.
const edges = [27, 52, 118, 122, 196, 199, 264, 290, 330, 384, 396, 541, 553, 608,
  647, 672, 739, 741, 817, 819, 886, 911, 950, 1006, 1017, 1163, 1175, 1228,
  1269, 1294, 1360, 1363, 1438, 1441, 1506];

function pwm(y, startHigh) {
  let high = startHigh;
  const level = () => y + (high ? 1.5 : 21.5);
  let d = `M${X0} ${level()}`;
  for (const e of edges) {
    d += `H${e + 0.5}`;
    high = !high;
    d += `V${level()}`;
  }
  draw(plot, 'path', { d: d + `H${END}`, fill: 'none', stroke: GREEN, 'stroke-width': 1.4 });
}

function clock(y) {
  draw(plot, 'rect', { x: X0, y: y + 2, width: END - X0, height: 20, fill: '#00ff00' });
}

function reset(y) {
  draw(plot, 'path', { d: `M${X0} ${y + 1.5}H${END}`, stroke: GREEN, 'stroke-width': 1.4 });
}

function bus(y) {
  draw(plot, 'rect', { x: X0, y: y + 1, width: END - X0, height: 22, fill: LIGHT });
  draw(plot, 'path', { d: `M${X0} ${y + 11.5}H${END}`, stroke: '#2c502c' });
}

// Value changes thin out near each turning point of the sine.
const outliers = [[-85, -64, 68, 84], [-62, 71, 78], [-88, -60, 61, 89], [-77, -73, -68, -60, 64], [-82, -64, 62, 67]];

function sineBus(y) {
  bus(y);
  outliers.forEach((extra, i) => {
    const c = X0 + (i + 0.5) * 310.5;
    const line = (o, w) => draw(plot, 'path', {
      d: `M${Math.round(c + o) + 0.5} ${y + 1}l-1 5v12l1 5`, fill: 'none', stroke: '#0c200c', 'stroke-width': w });
    const box = (o, w, top) => draw(plot, 'rect', {
      x: Math.round(c + o), y: y + top, width: w, height: 24 - 2 * top, fill: '#000' });
    extra.forEach(o => line(o, 1.3));
    [57, 52, 48, 44, 40, 38, 35, 33, 30].forEach(o => { line(-o, 1.3); line(o, 1.3); });
    [28, 25, 22, 19].forEach(o => { box(-o, 2, 5); line(-o, 1); box(o - 2, 2, 5); line(o, 1); });
    box(-16, 2, 3); box(-13, 4, 2);
    box(9, 4, 2); box(14, 2, 3);
    box(-7, 14, 2);
  });
}

function sine() {
  let d = '';
  for (let x = X0; x <= END; x += 3) {
    const v = 340 - 49.5 * Math.sin((x - X0) / 621 * 2 * Math.PI);
    d += (d ? 'L' : 'M') + x + ' ' + v.toFixed(1);
  }
  draw(plot, 'path', { d, fill: 'none', stroke: '#a0e8a0', 'stroke-width': 1.4 });
}

function triangle() {
  const half = 2560 * PX, top = 394, bottom = 493;
  for (let i = 0; i < 39; i++) {
    const x = X0 + i * half;
    const up = i % 2 === 0;
    draw(plot, 'path', {
      d: `M${x} ${up ? bottom : top}L${x + half} ${up ? top : bottom}`,
      stroke: '#a8f0a8', 'stroke-width': 1.6, 'stroke-dasharray': up ? '2 1.5' : 'none' });
  }
}

// Grid every 5000 ns, interrupted by the group title row.
for (let t = 5000; t <= 100000; t += 5000) {
  const x = Math.round(X0 + t * PX - 0.5) + 0.5;
  draw(plot, 'path', { d: `M${x} 0V601M${x} 627V800`, stroke: '#787878' });
}

pwm(3, false);
clock(29); reset(55); sineBus(81); bus(107);
pwm(133, true); pwm(159, false); pwm(185, true); pwm(211, false);
clock(237); reset(263);
sine(); triangle();
pwm(497, true); pwm(523, false); pwm(549, true); pwm(575, false);
draw(plot, 'text', { x: 7, y: 620, fill: '#f0f0f0' }, '( sim:/tb_spwm/spwm_inst_0/Group1 )');
clock(627); reset(653); sineBus(679); bus(705);
pwm(731, true); pwm(757, false); pwm(783, true);
draw(plot, 'path', { d: 'M2.5 0V800', stroke: '#c8a800' });
draw(plot, 'path', { d: 'M2.5 0V290M2.5 500V800', stroke: '#e02010', 'stroke-dasharray': '18 8' });
draw(plot, 'path', { d: 'M2.5 340V389', stroke: '#201090' });

for (let t = 2000; t <= 104000; t += 2000) {
  const x = Math.round(X0 + t * PX - 0.5) + 0.5;
  draw(ruler, 'path', { d: `M${x} ${t % 10000 ? 4 : 0}V8`, stroke: GREEN, 'stroke-width': 1.4 });
}
draw(ruler, 'text', { x: X0 - 5, y: 29, fill: '#14d014' }, '0 ns');
draw(ruler, 'rect', { x: 0, y: 9, width: 2, height: 22, fill: '#000' });
for (let t = 20000; t <= 100000; t += 20000) {
  draw(ruler, 'text', { x: X0 + t * PX, y: 29, fill: '#14d014', 'text-anchor': 'middle' }, t + ' ns');
}
draw(ruler, 'path', { d: 'M0 32.5H1595', stroke: '#777' });
draw(ruler, 'path', { d: 'M2.5 0V58', stroke: '#c8a800' });
draw(ruler, 'rect', { x: 3.5, y: 33.5, width: 65, height: 23, fill: '#000', stroke: '#c8a800' });
draw(ruler, 'text', { x: 6, y: 54, fill: '#d8b800' }, '0.00 n:');
```
